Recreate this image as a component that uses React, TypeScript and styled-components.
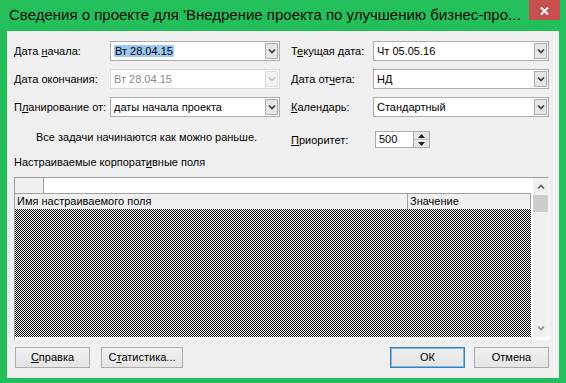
import styled, { createGlobalStyle } from 'styled-components'
import type { ReactNode } from 'react'

const GlobalStyle = createGlobalStyle`
  html, body {
    margin: 0;
    padding: 0;
  }
  body {
    font-family: "Liberation Sans", Arial, sans-serif;
    font-size: 11px;
    color: #000;
  }
`

const Frame = styled.div`
  width: 566px;
  height: 383px;
  box-sizing: border-box;
  background: #22bf5b;
  padding: 0 7px 5px 7px;
  display: flex;
  flex-direction: column;
`

const TitleBar = styled.div`
  height: 31px;
  display: flex;
  align-items: flex-start;
`

const Title = styled.div`
  font-size: 15px;
  line-height: 20px;
  padding: 5px 0 0 2px;
  white-space: nowrap;
  overflow: hidden;
  color: #0c0c0c;
`

const CloseButton = styled.div`
  margin-left: auto;
  margin-right: -1px;
  flex-shrink: 0;
  width: 31px;
  height: 20px;
  background: #c75050;
  display: flex;
  align-items: center;
  justify-content: center;
  padding-top: 2px;
  box-sizing: border-box;
`

const Client = styled.div`
  flex: 1;
  background: #f0f0f0;
  padding: 10px 10px 0 7px;
  display: flex;
  flex-direction: column;
`

const FieldsGrid = styled.div`
  display: grid;
  grid-template-columns: 96px 170px 93px 176px;
  grid-auto-rows: 20px;
  row-gap: 8px;
  align-items: center;
`

const Label = styled.div<{ $indent?: number }>`
  padding-left: ${({ $indent }) => $indent ?? 0}px;
  white-space: nowrap;
  line-height: 15px;
  padding-top: 1px;
`

const Combo = styled.div<{ $disabled?: boolean }>`
  height: 20px;
  box-sizing: border-box;
  border: 1px solid ${({ $disabled }) => ($disabled ? '#d9d9d9' : '#acacac')};
  background: #fff;
  display: flex;
  align-items: center;
  padding: 1px;
  color: ${({ $disabled }) => ($disabled ? '#8a8a8a' : '#000')};
`

const ComboValue = styled.div`
  flex: 1;
  padding-left: 2px;
  white-space: nowrap;
  line-height: 15px;
`

const Selected = styled.span`
  background: #9dc8f2;
  padding: 0 1px;
`

const ArrowBox = styled.div<{ $disabled?: boolean }>`
  width: 13px;
  height: 100%;
  box-sizing: border-box;
  border: 1px solid ${({ $disabled }) => ($disabled ? '#dcdcdc' : '#acacac')};
  background: ${({ $disabled }) => ($disabled ? '#f4f4f4' : '#e6e6e6')};
  display: flex;
  align-items: center;
  justify-content: center;
`

const PriorityRow = styled.div`
  margin-top: 14px;
  display: flex;
  align-items: center;
  height: 17px;
`

const Note = styled.div`
  width: 277px;
  padding-left: 22px;
  box-sizing: border-box;
  margin-top: -5px;
  white-space: nowrap;
`

const PriorityLabel = styled.div`
  width: 84px;
  white-space: nowrap;
`

const Spin = styled.div`
  width: 55px;
  height: 17px;
  box-sizing: border-box;
  border: 1px solid #acacac;
  background: #fff;
  display: flex;
  align-items: stretch;
`

const SpinValue = styled.div`
  flex: 1;
  padding-left: 3px;
  line-height: 15px;
`

const SpinButtons = styled.div`
  width: 15px;
  display: flex;
  flex-direction: column;
  border-left: 1px solid #acacac;
  background: #e6e6e6;
`

const SpinHalf = styled.div<{ $top?: boolean }>`
  flex: 1;
  display: flex;
  align-items: center;
  justify-content: center;
  border-bottom: ${({ $top }) => ($top ? '1px solid #c4c4c4' : 'none')};
`

const SectionLabel = styled.div`
  margin-top: 7px;
  line-height: 15px;
`

const GridBox = styled.div`
  margin-top: 7px;
  height: 163px;
  box-sizing: border-box;
  border-top: 1px solid #a0a0a0;
  border-left: 1px solid #a0a0a0;
  border-right: 1px solid #ffffff;
  background: #fff;
  display: flex;
  padding-bottom: 3px;
`

const GridMain = styled.div`
  width: 516px;
  display: flex;
  flex-direction: column;
`

const TopRow = styled.div`
  height: 15px;
  display: flex;
`

const CornerCell = styled.div`
  width: 28px;
  background: #f0f0f0;
  border-right: 1px solid #a0a0a0;
`

const HeaderRow = styled.div`
  height: 16px;
  box-sizing: border-box;
  display: flex;
  border-top: 1px solid #a0a0a0;
  background: #f0f0f0;
`

const HeaderCell = styled.div<{ $width: number }>`
  width: ${({ $width }) => $width}px;
  box-sizing: border-box;
  border-right: 1px solid #a0a0a0;
  padding-left: 2px;
  line-height: 15px;
  white-space: nowrap;
`

const Checker = styled.div`
  flex: 1;
  overflow: hidden;
  display: flex;

  svg {
    display: block;
  }
`

const Scrollbar = styled.div`
  margin-left: 2px;
  width: 16px;
  background: #f0f0f0;
  display: flex;
  flex-direction: column;
  align-items: stretch;
`

const ScrollArrow = styled.div`
  height: 17px;
  display: flex;
  align-items: center;
  justify-content: center;
`

const ScrollThumb = styled.div`
  height: 17px;
  background: #cdcdcd;
`

const ScrollTrack = styled.div`
  flex: 1;
`

const ButtonRow = styled.div`
  margin-top: 7px;
  padding-left: 1px;
  display: flex;
  align-items: center;
`

const Button = styled.div<{ $width: number; $default?: boolean; $gap?: number }>`
  width: ${({ $width }) => $width}px;
  height: 21px;
  box-sizing: border-box;
  margin-left: ${({ $gap }) => $gap ?? 0}px;
  border: 1px solid ${({ $default }) => ($default ? '#3c7fb1' : '#acacac')};
  ${({ $default }) => ($default ? 'box-shadow: inset 0 0 0 1px #7ab8ee;' : '')}
  background: linear-gradient(#f0f0f0, #e5e5e5);
  display: flex;
  align-items: center;
  justify-content: center;
  line-height: 15px;
`

const Spacer = styled.div`
  flex: 1;
`

function Chevron({ color = '#3d3d3d', up = false }: { color?: string; up?: boolean }) {
  return (
    <svg width="8" height="5" viewBox="0 0 8 5">
      <path d={up ? 'M1 4.5 L4 1.5 L7 4.5' : 'M1 0.5 L4 3.5 L7 0.5'} fill="none" stroke={color} strokeWidth="1.6" />
    </svg>
  )
}

function Triangle({ up }: { up?: boolean }) {
  return (
    <svg width="7" height="4" viewBox="0 0 7 4">
      <path d={up ? 'M0 4 L3.5 0 L7 4 Z' : 'M0 0 L3.5 4 L7 0 Z'} fill="#1e1e1e" />
    </svg>
  )
}

function ComboBox({ children, disabled }: { children: ReactNode; disabled?: boolean }) {
  return (
    <Combo $disabled={disabled}>
      <ComboValue>{children}</ComboValue>
      <ArrowBox $disabled={disabled}>
        <Chevron color={disabled ? '#c4c4c4' : '#3d3d3d'} />
      </ArrowBox>
    </Combo>
  )
}

// dithered "no rows" area of the grid
function Dither() {
  return (
    <svg width="516" height="129" shapeRendering="crispEdges">
      <defs>
        <pattern id="dither" width="2" height="2" patternUnits="userSpaceOnUse">
          <rect width="2" height="2" fill="#fff" />
          <rect width="1" height="1" fill="#000" />
          <rect x="1" y="1" width="1" height="1" fill="#000" />
        </pattern>
      </defs>
      <rect width="516" height="129" fill="url(#dither)" />
    </svg>
  )
}

export default function App() {
  return (
    <>
      <GlobalStyle />
      <Frame>
        <TitleBar>
          <Title>Сведения о проекте для 'Внедрение проекта по улучшению бизнес-про...</Title>
          <CloseButton>
            <svg width="9" height="8" viewBox="0 0 9 8">
              <path d="M1 0.5 L8 7.5 M8 0.5 L1 7.5" stroke="#fff" strokeWidth="2" />
            </svg>
          </CloseButton>
        </TitleBar>
        <Client>
          <FieldsGrid>
            <Label>Дата <u>н</u>ачала:</Label>
            <ComboBox>
              <Selected>Вт 28.04.15</Selected>
            </ComboBox>
            <Label $indent={11}>Т<u>е</u>кущая дата:</Label>
            <ComboBox>Чт 05.05.16</ComboBox>

            <Label><u>Д</u>ата окончания:</Label>
            <ComboBox disabled>Вт 28.04.15</ComboBox>
            <Label $indent={11}>Дата от<u>ч</u>ета:</Label>
            <ComboBox>НД</ComboBox>

            <Label>П<u>л</u>анирование от:</Label>
            <ComboBox>даты начала проекта</ComboBox>
            <Label $indent={11}><u>К</u>алендарь:</Label>
            <ComboBox>Стандартный</ComboBox>
          </FieldsGrid>

          <PriorityRow>
            <Note>Все задачи начинаются как можно раньше.</Note>
            <PriorityLabel><u>П</u>риоритет:</PriorityLabel>
            <Spin>
              <SpinValue>500</SpinValue>
              <SpinButtons>
                <SpinHalf $top>
                  <Triangle up />
                </SpinHalf>
                <SpinHalf>
                  <Triangle />
                </SpinHalf>
              </SpinButtons>
            </Spin>
          </PriorityRow>

          <SectionLabel>Настраиваемые корпорат<u>и</u>вные поля</SectionLabel>

          <GridBox>
            <GridMain>
              <TopRow>
                <CornerCell />
              </TopRow>
              <HeaderRow>
                <HeaderCell $width={393}>Имя настраиваемого поля</HeaderCell>
                <HeaderCell $width={123}>Значение</HeaderCell>
              </HeaderRow>
              <Checker>
                <Dither />
              </Checker>
            </GridMain>
            <Scrollbar>
              <ScrollArrow>
                <Chevron up color="#606060" />
              </ScrollArrow>
              <ScrollThumb />
              <ScrollTrack />
              <ScrollArrow>
                <Chevron color="#8a8a8a" />
              </ScrollArrow>
            </Scrollbar>
          </GridBox>

          <ButtonRow>
            <Button $width={75}><u>С</u>правка</Button>
            <Button $width={82} $gap={11}>С<u>т</u>атистика...</Button>
            <Spacer />
            <Button $width={75} $default>ОК</Button>
            <Button $width={75} $gap={9}>Отмена</Button>
          </ButtonRow>
        </Client>
      </Frame>
    </>
  )
}
